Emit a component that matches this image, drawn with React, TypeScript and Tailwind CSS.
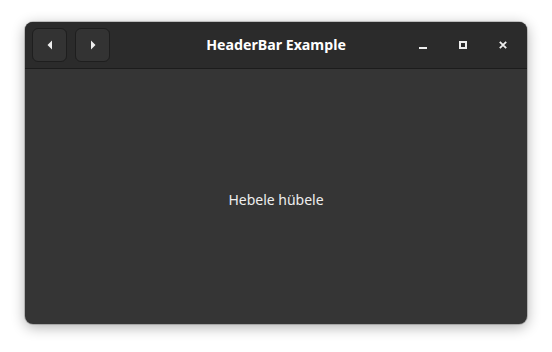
export default function App() {
  return (
    <div className="w-[552px] h-[352px] bg-white overflow-hidden pt-[22px] pl-[25px]" style={{ fontFamily: '"Noto Sans", "DejaVu Sans", sans-serif' }}>
      <div className="w-[502px] h-[302px] rounded-[8px] overflow-hidden flex flex-col bg-[#353535] shadow-[0_3px_14px_rgba(0,0,0,0.32),0_0_0_1px_rgba(0,0,0,0.18)]">
        {/* Header bar */}
        <div className="h-[47px] shrink-0 bg-[#2b2b2b] border-b border-[#1c1c1c] grid grid-cols-[1fr_auto_1fr] items-center">
          <div className="flex items-center gap-[8px] pl-[7px]">
            <button className="w-[35px] h-[34px] rounded-[6px] bg-[#333333] border border-[#1e1e1e] flex items-center justify-center">
              <svg width="6" height="10" viewBox="0 0 6 10">
                <path d="M5 0.5 L0.5 5 L5 9.5 Z" fill="#eeeeee" />
              </svg>
            </button>
            <button className="w-[35px] h-[34px] rounded-[6px] bg-[#333333] border border-[#1e1e1e] flex items-center justify-center">
              <svg width="6" height="10" viewBox="0 0 6 10">
                <path d="M1 0.5 L5.5 5 L1 9.5 Z" fill="#eeeeee" />
              </svg>
            </button>
          </div>
          <div className="text-[14.2px] font-bold text-white">HeaderBar Example</div>
          <div className="flex justify-end pr-[4px]">
            <div className="w-[40px] h-[24px] flex items-center justify-center">
              <svg width="8" height="8" viewBox="0 0 8 8">
                <rect x="0" y="6" width="8" height="2" fill="#eeeeee" />
              </svg>
            </div>
            <div className="w-[40px] h-[24px] flex items-center justify-center">
              <svg width="8" height="8" viewBox="0 0 8 8">
                <rect x="1" y="1" width="6" height="6" fill="none" stroke="#eeeeee" strokeWidth="2" />
              </svg>
            </div>
            <div className="w-[40px] h-[24px] flex items-center justify-center">
              <svg width="8" height="8" viewBox="0 0 8 8">
                <path d="M0.8 0.8 L7.2 7.2 M7.2 0.8 L0.8 7.2" stroke="#eeeeee" strokeWidth="1.8" />
              </svg>
            </div>
          </div>
        </div>
        {/* Content */}
        <div className="flex-1 flex items-center justify-center pt-[6px]">
          <span className="text-[14px] text-[#eeeeee]">Hebele hübele</span>
        </div>
      </div>
    </div>
  );
}
